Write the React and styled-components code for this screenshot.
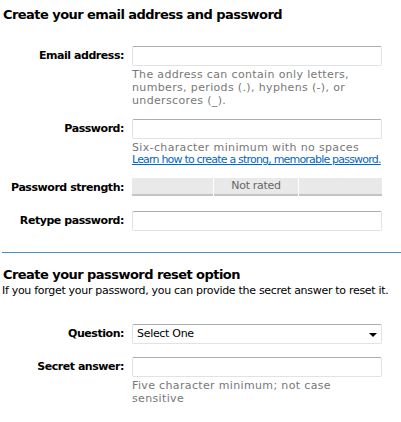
import React from "react";
import styled, { createGlobalStyle } from "styled-components";

const Global = createGlobalStyle`
  html, body { margin: 0; padding: 0; background: #fff; }
  body { font-family: "DejaVu Sans", Verdana, sans-serif; color: #000; }
`;

const Page = styled.div`
  width: 401px;
  height: 422px;
  overflow: hidden;
  padding-top: 6px;
  box-sizing: border-box;
`;

const Section = styled.section`
  padding: 0 0 0 3px;
`;

const Heading = styled.h2`
  margin: ${(p) => p.$top || 0}px 0 0 0;
  font-family: "DejaVu Sans", Verdana, sans-serif;
  font-weight: bold;
  font-size: 13px;
  line-height: 18px;
  letter-spacing: -0.55px;
  white-space: nowrap;
`;

const Intro = styled.p`
  margin: 0 0 0 -1px;
  font-size: 11px;
  line-height: 14px;
  letter-spacing: -0.3px;
  white-space: nowrap;
`;

const Form = styled.div`
  display: grid;
  grid-template-columns: 124px 250px;
  column-gap: 8px;
  margin-top: ${(p) => p.$top}px;
`;

const Label = styled.label`
  grid-column: 1;
  text-align: right;
  font-weight: bold;
  font-size: 11px;
  line-height: 20px;
  height: 20px;
  white-space: nowrap;
  letter-spacing: -0.45px;
  margin-top: ${(p) => p.$top || 0}px;
`;

const Field = styled.div`
  grid-column: 2;
  margin-top: ${(p) => p.$top || 0}px;
`;

const Input = styled.input`
  display: block;
  box-sizing: border-box;
  width: 250px;
  height: 20px;
  margin: 0;
  border: 1px solid #dfe3e8;
  border-top-color: #abadb3;
  border-radius: 2px;
  background: #fff;
  outline: none;
  padding: 0 4px;
`;

const Hint = styled.div`
  font-size: 11px;
  line-height: 13px;
  color: #777;
  margin-top: 2px;
  letter-spacing: 0.35px;
  white-space: nowrap;
`;

const HelpLink = styled.a`
  display: block;
  font-size: 11px;
  line-height: 12px;
  color: #0066cc;
  text-decoration: underline;
  letter-spacing: -0.8px;
  white-space: nowrap;
`;

const Strength = styled.div`
  display: grid;
  grid-template-columns: 81px 84px 83px;
  column-gap: 1px;
  width: 250px;
  height: 18px;
`;

const Seg = styled.div`
  background: #e9e9e9;
  border-bottom: 2px solid #c4c4c4;
  font-size: 11px;
  line-height: 16px;
  color: #666;
  text-align: center;
  letter-spacing: -0.3px;
`;

const Divider = styled.div`
  margin: 21px 0 0 2px;
  height: 1px;
  background: #4a90c8;
`;

const SelectBox = styled.div`
  position: relative;
  box-sizing: border-box;
  width: 250px;
  height: 20px;
  border: 1px solid #dfe3e8;
  border-top-color: #abadb3;
  border-radius: 2px;
  font-size: 11px;
  line-height: 18px;
  padding-left: 4px;
  letter-spacing: -0.3px;
`;

const Arrow = styled.span`
  position: absolute;
  right: 4px;
  top: 8px;
  width: 0;
  height: 0;
  border-left: 4px solid transparent;
  border-right: 4px solid transparent;
  border-top: 4px solid #000;
`;

export default function App() {
  return (
    <Page>
      <Global />
      <Section>
        <Heading>Create your email address and password</Heading>
      </Section>
      <Form $top={22}>
        <Label>Email address:</Label>
        <Field>
          <Input />
          <Hint>
            The address can contain only letters,
            <br />
            numbers, periods (.), hyphens (-), or
            <br />
            underscores (_).
          </Hint>
        </Field>
        <Label $top={12}>Password:</Label>
        <Field $top={12}>
          <Input type="password" />
          <Hint>Six-character minimum with no spaces</Hint>
          <HelpLink href="#">Learn how to create a strong, memorable password.</HelpLink>
        </Field>
        <Label $top={12}>Password strength:</Label>
        <Field $top={12}>
          <Strength>
            <Seg />
            <Seg>Not rated</Seg>
            <Seg />
          </Strength>
        </Field>
        <Label $top={13}>Retype password:</Label>
        <Field $top={13}>
          <Input type="password" />
        </Field>
      </Form>
      <Divider />
      <Section>
        <Heading $top={13}>Create your password reset option</Heading>
        <Intro>If you forget your password, you can provide the secret answer to reset it.</Intro>
      </Section>
      <Form $top={26}>
        <Label>Question:</Label>
        <Field>
          <SelectBox>
            Select One
            <Arrow />
          </SelectBox>
        </Field>
        <Label $top={13}>Secret answer:</Label>
        <Field $top={13}>
          <Input />
          <Hint>
            Five character minimum; not case
            <br />
            sensitive
          </Hint>
        </Field>
      </Form>
    </Page>
  );
}
